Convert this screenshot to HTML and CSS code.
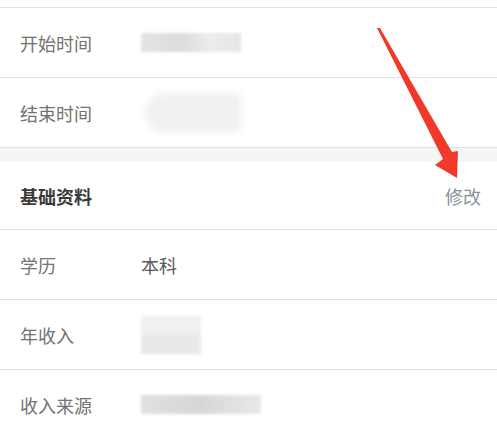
FILE: index.html
```html
<!DOCTYPE html>
<html lang="zh-CN">
<head>
  <meta charset="UTF-8">
  <meta name="viewport" content="width=device-width, initial-scale=1.0">
  <title>资料详情</title>
  <link rel="stylesheet" href="styles.css">
</head>
<body>

  <div class="page">
    <div class="row row-cut"></div>

    <div class="row">
      <span class="label">开始时间</span>
      <span class="mask mask-bar"></span>
    </div>

    <div class="row">
      <span class="label">结束时间</span>
      <span class="mask mask-blob"></span>
    </div>

    <div class="gap"></div>

    <div class="row section-head">
      <span class="title">基础资料</span>
      <a class="edit" href="#">修改</a>
    </div>

    <div class="row">
      <span class="label">学历</span>
      <span class="value">本科</span>
    </div>

    <div class="row">
      <span class="label">年收入</span>
      <span class="mask mask-box"></span>
    </div>

    <div class="row row-last">
      <span class="label">收入来源</span>
      <span class="mask mask-long"></span>
    </div>

    <!-- annotation arrow pointing at 修改 -->
    <svg class="arrow" width="497" height="425" viewBox="0 0 497 425">
      <polygon points="377,28 380,28 452,152 458,151 457,178 435,165 443,159" fill="#f1392b"/>
    </svg>
  </div>

</body>
</html>
```

FILE: styles.css
```css
body {
  margin: 0;
  padding: 0;
  background-color: #fff;
  font-family: "Noto Sans CJK SC", "Noto Sans", sans-serif;
}

.page {
  position: relative;
  width: 497px;
  height: 425px;
  overflow: hidden;
  background-color: #fff;
}

.row {
  display: flex;
  align-items: center;
  height: 69px;
  padding: 0 16px 0 20px;
  border-bottom: 1px solid #e2e2e2;
}

.row-cut {
  height: 7px;
}

.row-last {
  border-bottom: none;
}

.label {
  width: 121px;
  font-size: 18px;
  color: #727272;
}

.value {
  font-size: 18px;
  color: #5a5a5a;
}

.gap {
  height: 14px;
  background-color: #f5f5f5;
}

.section-head {
  justify-content: space-between;
  height: 67px;
}

.title {
  font-size: 18px;
  font-weight: bold;
  color: #3a3a3a;
}

.edit {
  font-size: 18px;
  color: #8a909a;
  text-decoration: none;
}

.mask {
  display: block;
  background-color: #e3e3e3;
  filter: blur(1.5px);
}

.mask-bar {
  width: 100px;
  height: 19px;
  background: linear-gradient(90deg, #e4e4e4, #dcdcdc 40%, #ececec 70%, #e6e6e6);
}

.mask-blob {
  width: 96px;
  height: 40px;
  margin-left: 4px;
  border-radius: 20px 6px 6px 20px;
  background-color: #f1f1f1;
  filter: blur(3px);
}

.mask-box {
  width: 60px;
  height: 38px;
  background: linear-gradient(180deg, #f0f0f0 50%, #e9e9e9 50%);
}

.mask-long {
  width: 120px;
  height: 19px;
  background: linear-gradient(90deg, #e0e0e0, #d6d6d6 50%, #dedede 70%, #e8e8e8);
}

.arrow {
  position: absolute;
  top: 0;
  left: 0;
  pointer-events: none;
}
```
